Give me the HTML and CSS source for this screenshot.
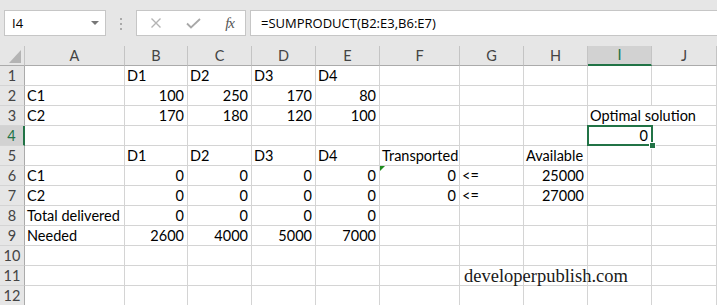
FILE: index.html
```html
<!DOCTYPE html>
<html lang="en">

<head>
    <meta charset="UTF-8">
    <title>Transportation sheet</title>
    <link rel="stylesheet" href="styles.css">
</head>

<body>
    <div class="formula-bar">
        <div class="name-box">
            <span>I4</span>
            <span class="name-box-arrow"></span>
        </div>
        <div class="formula-bar-grip">
            <span></span><span></span><span></span>
        </div>
        <div class="formula-bar-buttons">
            <svg width="12" height="12" viewBox="0 0 12 12">
                <path d="M1.5 1.5 L10.5 10.5 M10.5 1.5 L1.5 10.5" stroke="#b4b4b4" stroke-width="1.4" fill="none" />
            </svg>
            <svg width="15" height="11" viewBox="0 0 15 11">
                <path d="M1 5.5 L5 9.5 L14 1" stroke="#a8a8a8" stroke-width="1.8" fill="none" />
            </svg>
            <span class="fx">fx</span>
        </div>
        <div class="formula-input">=SUMPRODUCT(B2:E3,B6:E7)</div>
    </div>

    <div class="sheet">
        <div class="row head">
            <div class="corner"><span class="corner-mark"></span></div>
            <div class="ch">A</div><div class="ch">B</div><div class="ch">C</div><div class="ch">D</div><div class="ch">E</div>
            <div class="ch">F</div><div class="ch">G</div><div class="ch">H</div><div class="ch ch-active">I</div><div class="ch">J</div>
        </div>
        <div class="row">
            <div class="rh">1</div>
            <div class="c"></div><div class="c">D1</div><div class="c">D2</div><div class="c">D3</div><div class="c">D4</div>
            <div class="c"></div><div class="c"></div><div class="c"></div><div class="c"></div><div class="c"></div>
        </div>
        <div class="row">
            <div class="rh">2</div>
            <div class="c">C1</div><div class="c n">100</div><div class="c n">250</div><div class="c n">170</div><div class="c n">80</div>
            <div class="c"></div><div class="c"></div><div class="c"></div><div class="c"></div><div class="c"></div>
        </div>
        <div class="row">
            <div class="rh">3</div>
            <div class="c">C2</div><div class="c n">170</div><div class="c n">180</div><div class="c n">120</div><div class="c n">100</div>
            <div class="c"></div><div class="c"></div><div class="c"></div><div class="c spill">Optimal solution</div><div class="c"></div>
        </div>
        <div class="row">
            <div class="rh rh-active">4</div>
            <div class="c"></div><div class="c"></div><div class="c"></div><div class="c"></div><div class="c"></div>
            <div class="c"></div><div class="c"></div><div class="c"></div>
            <div class="c n selected">0<span class="selection"><span class="fill-handle"></span></span></div>
            <div class="c"></div>
        </div>
        <div class="row">
            <div class="rh">5</div>
            <div class="c"></div><div class="c">D1</div><div class="c">D2</div><div class="c">D3</div><div class="c">D4</div>
            <div class="c">Transported</div><div class="c"></div><div class="c">Available</div><div class="c"></div><div class="c"></div>
        </div>
        <div class="row">
            <div class="rh">6</div>
            <div class="c">C1</div><div class="c n">0</div><div class="c n">0</div><div class="c n">0</div><div class="c n">0</div>
            <div class="c n flagged">0</div><div class="c">&lt;=</div><div class="c n">25000</div><div class="c"></div><div class="c"></div>
        </div>
        <div class="row">
            <div class="rh">7</div>
            <div class="c">C2</div><div class="c n">0</div><div class="c n">0</div><div class="c n">0</div><div class="c n">0</div>
            <div class="c n">0</div><div class="c">&lt;=</div><div class="c n">27000</div><div class="c"></div><div class="c"></div>
        </div>
        <div class="row">
            <div class="rh">8</div>
            <div class="c">Total delivered</div><div class="c n">0</div><div class="c n">0</div><div class="c n">0</div><div class="c n">0</div>
            <div class="c"></div><div class="c"></div><div class="c"></div><div class="c"></div><div class="c"></div>
        </div>
        <div class="row">
            <div class="rh">9</div>
            <div class="c">Needed</div><div class="c n">2600</div><div class="c n">4000</div><div class="c n">5000</div><div class="c n">7000</div>
            <div class="c"></div><div class="c"></div><div class="c"></div><div class="c"></div><div class="c"></div>
        </div>
        <div class="row">
            <div class="rh">10</div>
            <div class="c"></div><div class="c"></div><div class="c"></div><div class="c"></div><div class="c"></div>
            <div class="c"></div><div class="c"></div><div class="c"></div><div class="c"></div><div class="c"></div>
        </div>
        <div class="row">
            <div class="rh">11</div>
            <div class="c"></div><div class="c"></div><div class="c"></div><div class="c"></div><div class="c"></div>
            <div class="c"></div><div class="c"></div><div class="c"></div><div class="c"></div><div class="c"></div>
        </div>
        <div class="row">
            <div class="rh">12</div>
            <div class="c"></div><div class="c"></div><div class="c"></div><div class="c"></div><div class="c"></div>
            <div class="c"></div><div class="c"></div><div class="c"></div><div class="c"></div><div class="c"></div>
        </div>
    </div>

    <div class="watermark">developerpublish.com</div>
</body>

</html>
```

FILE: styles.css
```css
body {
    background: #FFFFFF;
    margin: 0;
    width: 717px;
    height: 305px;
    overflow: hidden;
    position: relative;
    font-family: "Lato", "Noto Sans", sans-serif;
}

.formula-bar {
    display: flex;
    align-items: flex-start;
    height: 46px;
    padding: 10px 0 0 4px;
    box-sizing: border-box;
    background: #E6E6E6;
    font-family: "Open Sans", "Noto Sans", sans-serif;
    font-size: 13px;
    color: #000000;
}

.name-box {
    display: flex;
    align-items: center;
    justify-content: space-between;
    width: 102px;
    height: 26px;
    box-sizing: border-box;
    padding: 0 6px 0 7px;
    background: #FFFFFF;
    border: 1px solid #C6C6C6;
}

.name-box-arrow {
    width: 0;
    height: 0;
    border-left: 4px solid transparent;
    border-right: 4px solid transparent;
    border-top: 4px solid #777777;
}

.formula-bar-grip {
    display: flex;
    flex-direction: column;
    gap: 3px;
    width: 30px;
    padding-top: 8px;
    align-items: center;
}

.formula-bar-grip span {
    width: 2px;
    height: 2px;
    background: #AAAAAA;
}

.formula-bar-buttons {
    display: flex;
    align-items: center;
    justify-content: space-between;
    width: 110px;
    height: 26px;
    box-sizing: border-box;
    padding: 0 11px 0 13px;
    background: #FFFFFF;
    border: 1px solid #C6C6C6;
}

.fx {
    font-family: "Liberation Serif", serif;
    font-style: italic;
    font-size: 15px;
    color: #555555;
    letter-spacing: -1px;
}

.formula-input {
    flex: 1;
    height: 26px;
    box-sizing: border-box;
    margin-left: 4px;
    padding-left: 10px;
    line-height: 24px;
    background: #FFFFFF;
    border: 1px solid #C6C6C6;
    border-right: none;
    white-space: nowrap;
}

.sheet {
    font-size: 14.5px;
}

.row {
    display: grid;
    grid-template-columns: 25px 100px 63px 64px 64px 64px 80px 64px 64px 64px 1fr;
    height: 20px;
}

.head {
    background: #E6E6E6;
}

.corner {
    position: relative;
    border-right: 1px solid #C4C4C4;
    border-bottom: 1px solid #ABABAB;
}

.corner-mark {
    position: absolute;
    right: 3px;
    bottom: 2px;
    width: 0;
    height: 0;
    border-left: 12px solid transparent;
    border-bottom: 13px solid #B4B4B4;
}

.ch {
    border-right: 1px solid #C4C4C4;
    border-bottom: 1px solid #ABABAB;
    text-align: center;
    line-height: 19px;
    color: #444444;
}

.ch-active {
    background: #D2D2D2;
    border-bottom: 2px solid #217346;
    line-height: 18px;
    color: #217346;
}

.rh {
    background: #E6E6E6;
    border-right: 1px solid #ABABAB;
    border-bottom: 1px solid #D4D4D4;
    text-align: center;
    line-height: 19px;
    color: #444444;
}

.rh-active {
    background: #D2D2D2;
    border-right: 2px solid #217346;
    color: #217346;
}

.c {
    position: relative;
    border-right: 1px solid #D4D4D4;
    border-bottom: 1px solid #D4D4D4;
    padding: 0 3px 0 2px;
    line-height: 19px;
    white-space: nowrap;
    overflow: hidden;
    color: #000000;
}

.n {
    text-align: right;
}

.spill {
    overflow: visible;
    border-right-color: #FFFFFF;
    z-index: 1;
}

.selected {
    overflow: visible;
    z-index: 2;
}

.selection {
    position: absolute;
    top: -1px;
    left: -1px;
    width: 66px;
    height: 21px;
    box-sizing: border-box;
    border: 2px solid #217346;
}

.fill-handle {
    position: absolute;
    right: -5px;
    bottom: -5px;
    width: 5px;
    height: 5px;
    background: #217346;
    border: 1px solid #FFFFFF;
}

.flagged::before {
    content: "";
    position: absolute;
    top: 0;
    left: 0;
    border-top: 5px solid #1E8C1E;
    border-right: 5px solid transparent;
}

.watermark {
    position: absolute;
    left: 464px;
    top: 267px;
    font-family: "Liberation Serif", serif;
    font-size: 18.5px;
    line-height: 18.5px;
    color: #1A1A1A;
}
```
